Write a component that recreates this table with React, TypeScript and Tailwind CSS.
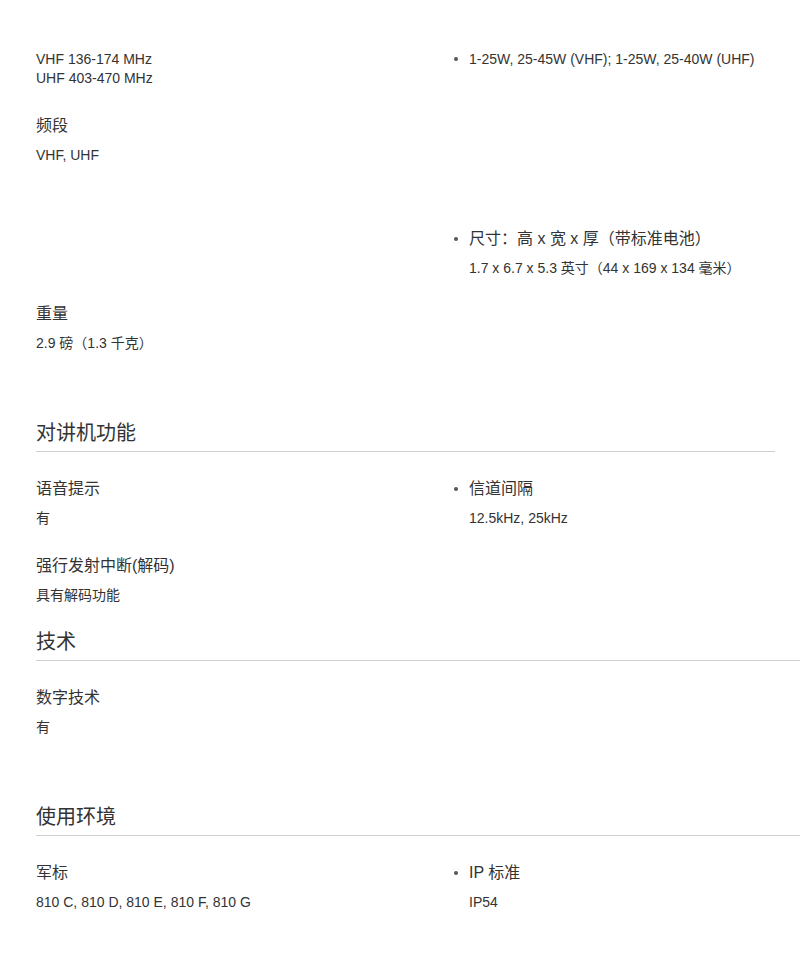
import React from 'react';

const font = { fontFamily: '"Liberation Sans", "Noto Sans CJK SC", sans-serif' };

const Item: React.FC<{ label?: string; value: string }> = ({ label, value }) => (
  <div>
    {label && <div className="text-[16px] leading-6 text-[#333]">{label}</div>}
    <div className={`text-[14px] leading-5 text-[#333] ${label ? 'mt-[7px]' : ''}`}>{value}</div>
  </div>
);

const Bullet: React.FC<{ children: React.ReactNode; dotTop?: string }> = ({ children, dotTop = 'mt-[10px]' }) => (
  <div className="flex">
    <div className="w-[19px] shrink-0 flex justify-start">
      <span className={`${dotTop} ml-[4px] block w-[4px] h-[4px] rounded-full bg-[#555]`} />
    </div>
    <div>{children}</div>
  </div>
);

const Row: React.FC<{ left?: React.ReactNode; right?: React.ReactNode; className?: string }> = ({ left, right, className }) => (
  <div className={`grid grid-cols-[414px_1fr] ${className ?? ''}`}>
    <div>{left}</div>
    <div>{right}</div>
  </div>
);

const Header: React.FC<{ title: string; className?: string }> = ({ title, className }) => (
  <div className={`pb-[4px] border-b border-[#cfcfcf] ${className ?? ''}`}>
    <h2 className="text-[20px] leading-7 text-[#333]">{title}</h2>
  </div>
);

export default function App() {
  return (
    <div className="w-[800px] h-[954px] bg-white overflow-hidden" style={font}>
      <div className="pl-[36px]">
        <Row
          className="pt-[50px]"
          left={
            <div className="text-[14px] leading-[19px] text-[#333]">
              <div>VHF 136-174 MHz</div>
              <div>UHF 403-470 MHz</div>
            </div>
          }
          right={
            <Bullet dotTop="mt-[7px]">
              <div className="text-[14px] leading-[19px] text-[#333]">1-25W, 25-45W (VHF); 1-25W, 25-40W (UHF)</div>
            </Bullet>
          }
        />
        <Row className="mt-[26px]" left={<Item label="频段" value="VHF, UHF" />} />
        <Row
          className="mt-[62px]"
          right={
            <Bullet>
              <Item label="尺寸：高 x 宽 x 厚（带标准电池）" value="1.7 x 6.7 x 5.3 英寸（44 x 169 x 134 毫米）" />
            </Bullet>
          }
        />
        <Row className="mt-[24px]" left={<Item label="重量" value="2.9 磅（1.3 千克）" />} />

        <Header title="对讲机功能" className="mt-[66px] w-[739px]" />
        <Row
          className="mt-[25px]"
          left={<Item label="语音提示" value="有" />}
          right={
            <Bullet>
              <Item label="信道间隔" value="12.5kHz, 25kHz" />
            </Bullet>
          }
        />
        <Row className="mt-[26px]" left={<Item label="强行发射中断(解码)" value="具有解码功能" />} />

        <Header title="技术" className="mt-[23px]" />
        <Row className="mt-[25px]" left={<Item label="数字技术" value="有" />} />

        <Header title="使用环境" className="mt-[66px]" />
        <Row
          className="mt-[25px]"
          left={<Item label="军标" value="810 C, 810 D, 810 E, 810 F, 810 G" />}
          right={
            <Bullet>
              <Item label="IP 标准" value="IP54" />
            </Bullet>
          }
        />
      </div>
    </div>
  );
}
